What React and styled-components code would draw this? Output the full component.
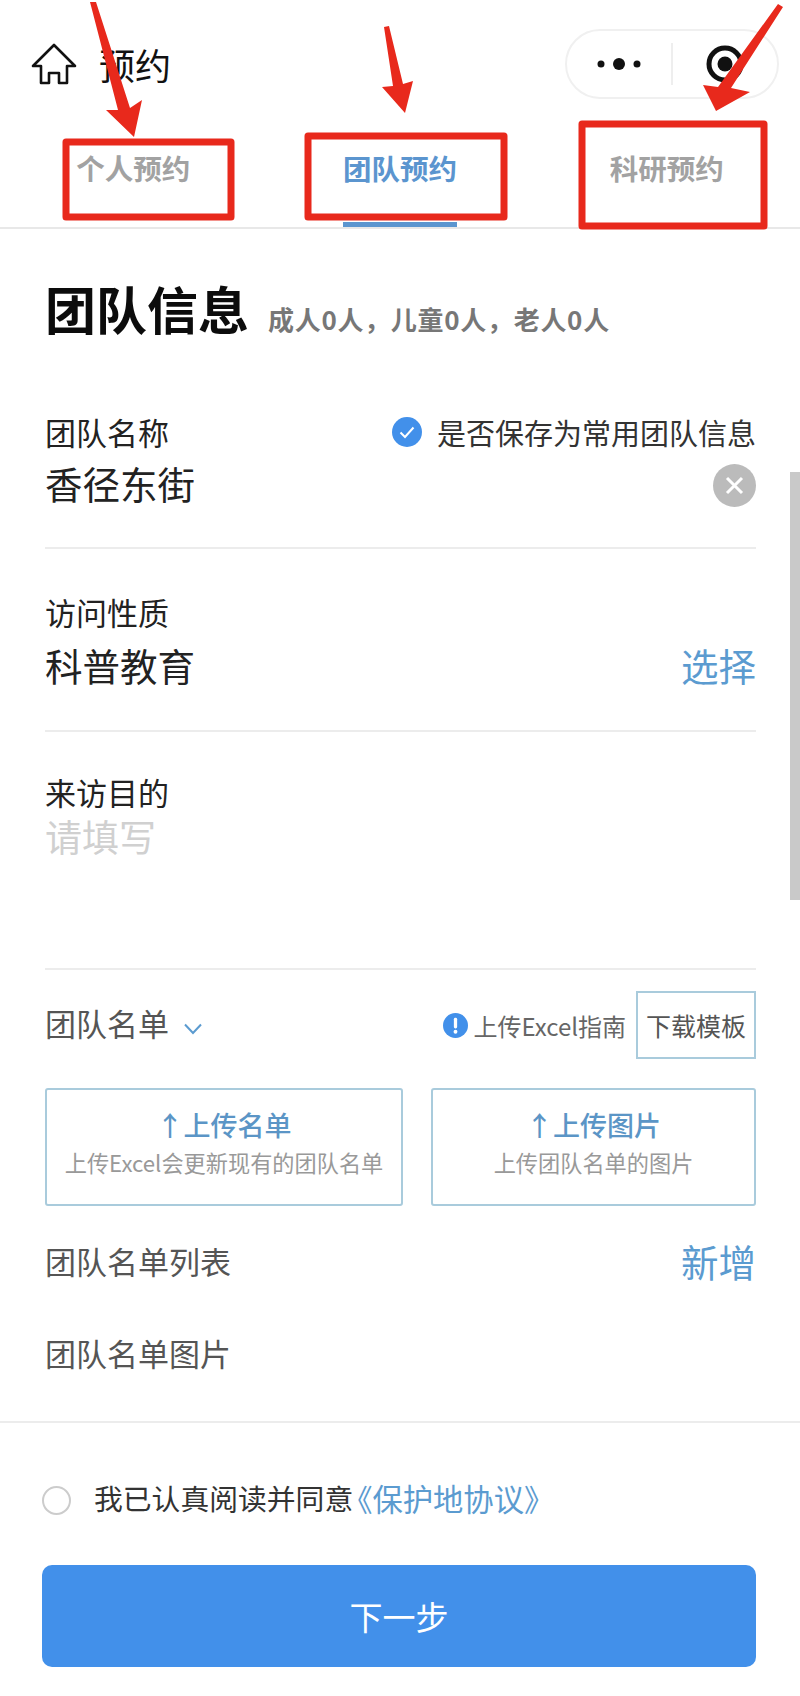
import React from 'react';
import styled, { createGlobalStyle } from 'styled-components';

const GlobalStyle = createGlobalStyle`
  html, body {
    margin: 0;
    padding: 0;
    background: #fff;
  }
  * {
    box-sizing: border-box;
  }
`;

const tabs = [
  { id: 'personal', label: '个人预约' },
  { id: 'team', label: '团队预约', active: true },
  { id: 'research', label: '科研预约' },
];

const App = () => (
  <Page>
    <GlobalStyle />

    <NavBar>
      <NavLeft>
        <svg width="46" height="42" viewBox="0 0 46 42" fill="none" stroke="#111" strokeWidth="2.6" strokeLinejoin="round">
          <path d="M23 2 L2 23 H10 V40 H18 V30 H28 V40 H36 V23 H44 Z" />
        </svg>
        <NavTitle>预约</NavTitle>
      </NavLeft>
      <Capsule>
        <CapsuleCell>
          <svg width="44" height="14" viewBox="0 0 44 14" fill="#111">
            <circle cx="4" cy="7" r="3.5" />
            <circle cx="22" cy="7" r="6" />
            <circle cx="40" cy="7" r="3.5" />
          </svg>
        </CapsuleCell>
        <CapsuleDivider />
        <CapsuleCell>
          <svg width="40" height="42" viewBox="0 0 40 42" fill="none">
            <circle cx="20" cy="21" r="16" stroke="#111" strokeWidth="5" />
            <circle cx="20" cy="21" r="7.5" fill="#111" />
          </svg>
        </CapsuleCell>
      </Capsule>
    </NavBar>

    <TabBar>
      {tabs.map((tab) => (
        <Tab key={tab.id}>
          <TabLabel $active={tab.active}>{tab.label}</TabLabel>
        </Tab>
      ))}
    </TabBar>

    <Main>
      <Heading>
        <HeadingTitle>团队信息</HeadingTitle>
        <HeadingCount>成人0人，儿童0人，老人0人</HeadingCount>
      </Heading>

      <NameField>
        <LabelRow>
          <FieldLabel>团队名称</FieldLabel>
          <SaveOption>
            <svg width="30" height="30" viewBox="0 0 30 30">
              <circle cx="15" cy="15" r="15" fill="#4290ea" />
              <path d="M8.5 15.5 L13 20 L21.5 10.5" fill="none" stroke="#fff" strokeWidth="2" />
            </svg>
            是否保存为常用团队信息
          </SaveOption>
        </LabelRow>
        <ValueRow $gap={5}>
          <FieldValue>香径东街</FieldValue>
          <ClearIcon width="43" height="43" viewBox="0 0 43 43">
            <circle cx="21.5" cy="21.5" r="21.5" fill="#bbb" />
            <path d="M14 14 L29 29 M29 14 L14 29" stroke="#fff" strokeWidth="3" />
          </ClearIcon>
        </ValueRow>
      </NameField>

      <NatureField>
        <FieldLabel>访问性质</FieldLabel>
        <ValueRow $gap={7}>
          <FieldValue>科普教育</FieldValue>
          <ActionLink>选择</ActionLink>
        </ValueRow>
      </NatureField>

      <PurposeField>
        <FieldLabel>来访目的</FieldLabel>
        <Placeholder>请填写</Placeholder>
      </PurposeField>

      <RosterHeader>
        <RosterTitle>
          团队名单
          <svg width="20" height="12" viewBox="0 0 20 12" fill="none" stroke="#5b9bd0" strokeWidth="2">
            <path d="M2 1.5 L10 10 L18 1.5" />
          </svg>
        </RosterTitle>
        <RosterTools>
          <GuideLink>
            <svg width="25" height="25" viewBox="0 0 26 26">
              <circle cx="13" cy="13" r="13" fill="#4290ea" />
              <rect x="11.3" y="5" width="3.4" height="11" rx="1.5" fill="#fff" />
              <circle cx="13" cy="19.5" r="2" fill="#fff" />
            </svg>
            上传Excel指南
          </GuideLink>
          <TemplateButton>下载模板</TemplateButton>
        </RosterTools>
      </RosterHeader>

      <UploadGrid>
        <UploadCard>
          <UploadTitle>↑上传名单</UploadTitle>
          <UploadHint>上传Excel会更新现有的团队名单</UploadHint>
        </UploadCard>
        <UploadCard>
          <UploadTitle>↑上传图片</UploadTitle>
          <UploadHint>上传团队名单的图片</UploadHint>
        </UploadCard>
      </UploadGrid>

      <ListRow>
        <MutedLabel>团队名单列表</MutedLabel>
        <ActionLink>新增</ActionLink>
      </ListRow>

      <ImageLabel>团队名单图片</ImageLabel>
    </Main>

    <Footer>
      <Agreement>
        <Radio />
        <AgreementText>我已认真阅读并同意</AgreementText>
        <AgreementLink>《保护地协议》</AgreementLink>
      </Agreement>
      <NextButton>下一步</NextButton>
    </Footer>

    <ScrollThumb />

    {/* red annotations painted on top of the screenshot */}
    <Annotations viewBox="0 0 800 1696">
      <g fill="none" stroke="#e8291c" strokeWidth="7" strokeLinejoin="round">
        <rect x="66" y="142" width="165" height="75" />
        <rect x="308" y="136" width="196" height="81" />
        <rect x="582" y="124" width="182" height="102" />
      </g>
      <g fill="#e8291c">
        <polygon points="90,2 96,2 130,108 142,100 134,137 106,110 118,110" />
        <polygon points="384,27 389,26 403,84 413,81 405,113 382,87 393,86" />
        <polygon points="778,4 783,7 731,88 750,92 716,111 703,85 718,87" />
      </g>
    </Annotations>
  </Page>
);

const Page = styled.div`
  position: relative;
  width: 800px;
  height: 1696px;
  overflow: hidden;
  background: #fff;
  color: #222;
  font-family: "Noto Sans CJK SC", "Noto Sans", sans-serif;
`;

const NavBar = styled.header`
  display: flex;
  align-items: center;
  justify-content: space-between;
  height: 128px;
  padding: 0 21px 0 31px;
`;

const NavLeft = styled.div`
  display: flex;
  align-items: center;
  gap: 22px;
`;

const NavTitle = styled.div`
  font-size: 36px;
  line-height: 46px;
  color: #111;
`;

const Capsule = styled.div`
  display: flex;
  align-items: center;
  width: 214px;
  height: 70px;
  border: 2px solid #f0f0f0;
  border-radius: 35px;
`;

const CapsuleCell = styled.div`
  flex: 1;
  display: flex;
  justify-content: center;
  align-items: center;
`;

const CapsuleDivider = styled.div`
  width: 2px;
  height: 42px;
  background: #eee;
`;

const TabBar = styled.nav`
  display: grid;
  grid-template-columns: repeat(3, 1fr);
  height: 101px;
  border-bottom: 2px solid #e8e8e8;
`;

const Tab = styled.div`
  display: flex;
  justify-content: center;
  padding-top: 20px;
`;

const TabLabel = styled.div`
  height: 79px;
  font-size: 28.5px;
  line-height: 40px;
  font-weight: 700;
  color: ${(p) => (p.$active ? '#5b95cf' : '#a2a2a2')};
  border-bottom: 5px solid ${(p) => (p.$active ? '#5b95cf' : 'transparent')};
`;

const Main = styled.main`
  padding: 0 44px 48px 45px;
`;

const Heading = styled.div`
  display: flex;
  align-items: baseline;
  gap: 19px;
  padding-top: 47px;
`;

const HeadingTitle = styled.h1`
  margin: 0;
  font-size: 51px;
  line-height: 64px;
  font-weight: 700;
  color: #0c0c0c;
`;

const HeadingCount = styled.span`
  font-size: 26px;
  letter-spacing: 0.7px;
  font-weight: 700;
  color: #777;
`;

const Field = styled.section`
  border-bottom: 2px solid #ececec;
`;

const NameField = styled(Field)`
  margin-top: 71px;
  padding-bottom: 39px;
`;

const NatureField = styled(Field)`
  padding: 42px 0 40px;
`;

const PurposeField = styled(Field)`
  padding: 39px 0 107px;
`;

const LabelRow = styled.div`
  display: flex;
  align-items: center;
  justify-content: space-between;
`;

const FieldLabel = styled.div`
  font-size: 31px;
  line-height: 42px;
  color: #222;
`;

const SaveOption = styled.div`
  display: flex;
  align-items: center;
  gap: 15px;
  font-size: 29px;
  line-height: 42px;
  color: #333;
`;

const ValueRow = styled.div`
  display: flex;
  align-items: center;
  justify-content: space-between;
  margin-top: ${(p) => p.$gap}px;
`;

const ClearIcon = styled.svg`
  margin-top: 4px;
`;

const FieldValue = styled.div`
  font-size: 37.5px;
  line-height: 50px;
  color: #222;
`;

const ActionLink = styled.div`
  font-size: 37.5px;
  line-height: 50px;
  color: #5b9bd0;
`;

const Placeholder = styled.div`
  margin-top: -2px;
  font-size: 37px;
  line-height: 50px;
  color: #d0d0d0;
`;

const RosterHeader = styled.div`
  display: flex;
  align-items: center;
  justify-content: space-between;
  padding-top: 21px;
`;

const RosterTitle = styled.div`
  display: flex;
  align-items: center;
  gap: 14px;
  padding-bottom: 4px;
  font-size: 31px;
  line-height: 42px;
  color: #555;

  svg {
    margin-top: 12px;
  }
`;

const RosterTools = styled.div`
  display: flex;
  align-items: center;
  gap: 10px;
`;

const GuideLink = styled.div`
  display: flex;
  align-items: center;
  gap: 5px;
  font-size: 24px;
  color: #666;
`;

const TemplateButton = styled.div`
  display: flex;
  align-items: center;
  justify-content: center;
  width: 120px;
  height: 68px;
  font-size: 25px;
  color: #555;
  border: 2px solid #a9cbdc;
`;

const UploadGrid = styled.div`
  display: grid;
  grid-template-columns: 358px 325px;
  gap: 28px;
  margin-top: 29px;
`;

const UploadCard = styled.div`
  display: flex;
  flex-direction: column;
  align-items: center;
  height: 118px;
  padding-top: 16px;
  border: 2px solid #a9cbdc;
  border-radius: 3px;
`;

const UploadTitle = styled.div`
  font-size: 27px;
  line-height: 38px;
  font-weight: 500;
  color: #5b95c6;
`;

const UploadHint = styled.div`
  margin-top: 2px;
  font-size: 22.2px;
  line-height: 32px;
  color: #999;
`;

const ListRow = styled.div`
  display: flex;
  align-items: center;
  justify-content: space-between;
  margin-top: 30px;
`;

const MutedLabel = styled.div`
  font-size: 31px;
  line-height: 42px;
  color: #555;
`;

const ImageLabel = styled(MutedLabel)`
  margin-top: 46px;
`;

const Footer = styled.footer`
  padding: 0 44px 0 42px;
  border-top: 2px solid #ececec;
  margin-top: -1px;
`;

const Agreement = styled.div`
  display: flex;
  align-items: center;
  padding-top: 55px;
`;

const Radio = styled.span`
  width: 29px;
  height: 29px;
  margin: 4px 23px 0 0;
  border: 2px solid #ccc;
  border-radius: 50%;
`;

const AgreementText = styled.span`
  font-size: 28.8px;
  line-height: 40px;
  color: #333;
`;

const AgreementLink = styled.span`
  font-size: 30.3px;
  line-height: 40px;
  color: #5b9bd0;
  margin-left: -11px;
`;

const NextButton = styled.button`
  display: block;
  width: 714px;
  height: 102px;
  margin-top: 47px;
  padding: 0;
  border: none;
  border-radius: 10px;
  background: #4290ea;
  color: #fff;
  font-family: inherit;
  font-size: 33px;
`;

const ScrollThumb = styled.div`
  position: absolute;
  top: 472px;
  right: 0;
  width: 10px;
  height: 428px;
  background: #c9c9c9;
`;

const Annotations = styled.svg`
  position: absolute;
  inset: 0;
  width: 800px;
  height: 1696px;
  pointer-events: none;
`;

export default App;
